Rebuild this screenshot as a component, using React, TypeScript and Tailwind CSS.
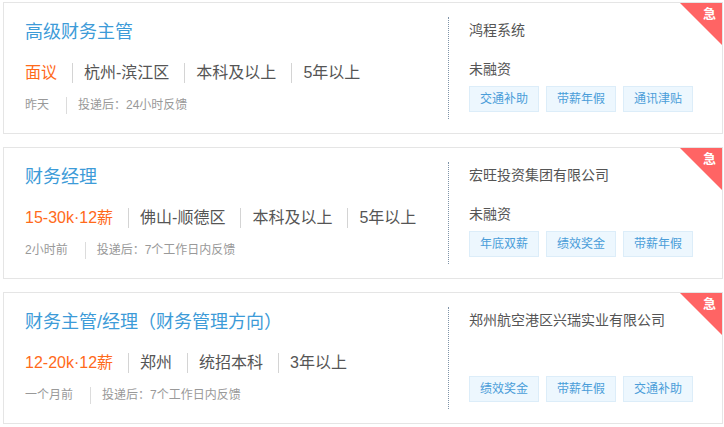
import React from 'react';

interface Job {
  title: string;
  salary: string;
  meta: string[];
  time: string;
  feedback: string;
  company: string;
  funding?: string;
  tags: string[];
}

const jobs: Job[] = [
  {
    title: '高级财务主管',
    salary: '面议',
    meta: ['杭州-滨江区', '本科及以上', '5年以上'],
    time: '昨天',
    feedback: '投递后：24小时反馈',
    company: '鸿程系统',
    funding: '未融资',
    tags: ['交通补助', '带薪年假', '通讯津贴'],
  },
  {
    title: '财务经理',
    salary: '15-30k·12薪',
    meta: ['佛山-顺德区', '本科及以上', '5年以上'],
    time: '2小时前',
    feedback: '投递后：7个工作日内反馈',
    company: '宏旺投资集团有限公司',
    funding: '未融资',
    tags: ['年底双薪', '绩效奖金', '带薪年假'],
  },
  {
    title: '财务主管/经理（财务管理方向）',
    salary: '12-20k·12薪',
    meta: ['郑州', '统招本科', '3年以上'],
    time: '一个月前',
    feedback: '投递后：7个工作日内反馈',
    company: '郑州航空港区兴瑞实业有限公司',
    tags: ['绩效奖金', '带薪年假', '交通补助'],
  },
];

const JobCard: React.FC<{ job: Job }> = ({ job }) => (
  <div className="relative flex h-[132px] w-[720px] overflow-hidden border border-[#e5e5e5] bg-white">
    {/* Left: job info */}
    <div className="w-[444px] shrink-0 pl-[21px] pt-[16px]">
      <div className="h-[26px] text-[18px] leading-[26px] text-[#3d9bd8]">{job.title}</div>
      <div className="mt-[17px] flex h-[22px] items-center text-[16px] leading-[22px] text-[#555]">
        <span className="text-[#ff6a1a]">{job.salary}</span>
        {job.meta.map((m) => (
          <React.Fragment key={m}>
            <span className="ml-[15px] mr-[11px] h-[20px] w-px bg-[#d4d4d4]" />
            <span>{m}</span>
          </React.Fragment>
        ))}
      </div>
      <div className="mt-[12px] flex h-[18px] items-center text-[12px] leading-[18px] text-[#999]">
        <span>{job.time}</span>
        <span className="ml-[17px] mr-[11px] h-[17px] w-px bg-[#dcdcdc]" />
        <span>{job.feedback}</span>
      </div>
    </div>

    {/* Dotted divider */}
    <div className="mt-[14px] h-[102px] w-0 shrink-0 border-l border-dotted border-[#7f93a8]" />

    {/* Right: company info */}
    <div className="pl-[20px] pt-[16px]">
      <div className="h-[22px] text-[14px] leading-[22px] text-[#555]">{job.company}</div>
      <div className="mt-[17px] h-[22px] text-[14px] leading-[22px] text-[#555]">{job.funding ?? ''}</div>
      <div className="mt-[6px] flex gap-[7px]">
        {job.tags.map((t) => (
          <span
            key={t}
            className="flex h-[26px] w-[70px] items-center justify-center border border-[#dcedf9] bg-[#edf7fe] text-[12px] text-[#4a9dd9]"
          >
            {t}
          </span>
        ))}
      </div>
    </div>

    {/* Urgent corner badge */}
    <div className="absolute right-0 top-0 h-[42px] w-[42px] bg-[#ff6464] [clip-path:polygon(0_0,100%_0,100%_100%)]" />
    <span className="absolute right-[6px] top-[2px] text-[13px] font-bold leading-[18px] text-white">急</span>
  </div>
);

export default function App() {
  return (
    <div
      className="flex min-h-[427px] flex-col gap-[13px] bg-white pl-[3px] pt-[2px]"
      style={{ fontFamily: '"Liberation Sans", "Noto Sans CJK SC", sans-serif' }}
    >
      {jobs.map((j) => (
        <JobCard key={j.title} job={j} />
      ))}
    </div>
  );
}
